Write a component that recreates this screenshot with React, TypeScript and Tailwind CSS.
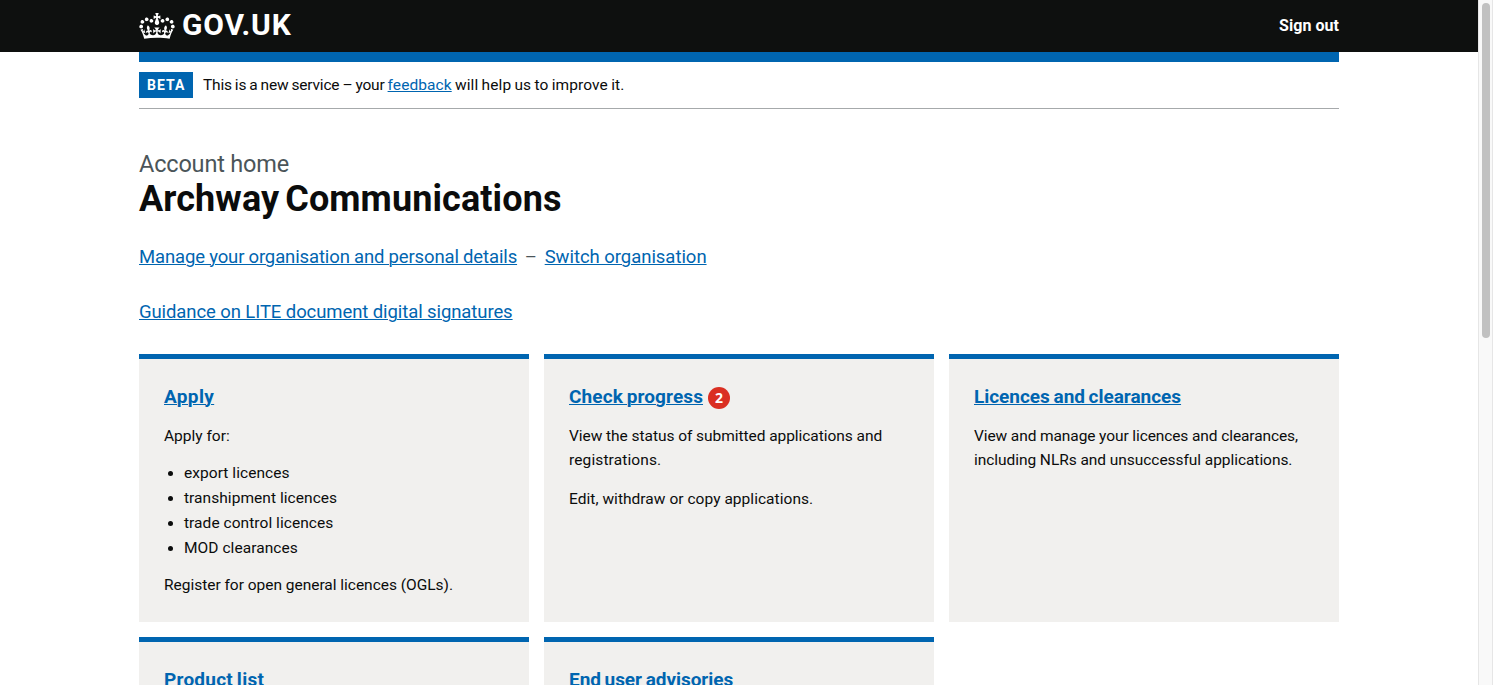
import type { ReactNode } from "react";

const linkClass = "text-[#0065b0] underline decoration-1 underline-offset-[1px]";

function Crown() {
  return (
    <svg viewBox="0 0 132 97" className="mt-px h-[26px] w-9 shrink-0" fill="currentColor" aria-hidden="true">
      <path
        fillRule="evenodd"
        d="M25 30.2c3.5 1.5 7.7-.2 9.1-3.7 1.5-3.6-.2-7.8-3.9-9.2-3.6-1.4-7.6.3-9.1 3.9-1.4 3.5.3 7.5 3.9 9zM9 39.5c3.6 1.5 7.8-.2 9.2-3.7 1.5-3.6-.2-7.8-3.9-9.1-3.6-1.5-7.6.2-9.1 3.8-1.4 3.5.3 7.5 3.8 9zM4.4 57.2c3.5 1.5 7.7-.2 9.1-3.8 1.5-3.6-.2-7.7-3.9-9.1-3.5-1.5-7.6.3-9.1 3.8-1.4 3.5.3 7.6 3.9 9.1zm38.3-21.4c3.5 1.5 7.7-.2 9.1-3.8 1.5-3.6-.2-7.7-3.9-9.1-3.6-1.5-7.6.3-9.1 3.8-1.3 3.6.4 7.7 3.9 9.1zm64.4-5.6c-3.6 1.5-7.8-.2-9.1-3.7-1.5-3.6.2-7.8 3.8-9.2 3.6-1.4 7.7.3 9.2 3.9 1.3 3.5-.4 7.5-3.9 9zm15.9 9.3c-3.6 1.5-7.7-.2-9.1-3.7-1.5-3.6.2-7.8 3.7-9.1 3.6-1.5 7.7.2 9.2 3.8 1.5 3.5-.3 7.5-3.8 9zm4.7 17.7c-3.6 1.5-7.8-.2-9.2-3.8-1.5-3.6.2-7.7 3.9-9.1 3.6-1.5 7.7.3 9.2 3.8 1.3 3.5-.4 7.6-3.9 9.1zM89.3 35.8c-3.6 1.5-7.8-.2-9.2-3.8-1.4-3.6.2-7.7 3.9-9.1 3.6-1.5 7.7.3 9.2 3.8 1.4 3.6-.3 7.7-3.9 9.1zM69.7 17.7l8.9 4.7V9.3l-8.9 2.8c-.2-.3-.5-.6-.9-.9L72.4 0H59.6l3.5 11.2c-.3.3-.6.5-.9.9l-8.8-2.8v13.1l8.8-4.7c.3.3.6.7.9.9l-5 15.4v.1c-.2.8-.4 1.6-.4 2.4 0 4.1 3.1 7.5 7 8.1h.2c.3 0 .7.1 1 .1.4 0 .7 0 1-.1h.2c4-.6 7.1-4.1 7.1-8.1 0-.8-.1-1.7-.4-2.4V34l-5.1-15.4c.4-.2.7-.6 1-.9zM66 92.8c16.9 0 32.8 1.1 47.1 3.2 4-16.9 8.9-26.7 14-33.5l-9.6-3.4c1 4.9 1.1 7.2 0 10.2-1.5-1.4-3-4.3-4.2-8.7L108.6 76c2.8-2 5-3.2 7.5-3.3-4.4 9.4-10 11.9-13.6 11.2-4.3-.8-6.3-4.6-5.6-7.9 1-4.7 5.7-5.9 8-.5 4.3-8.7-3-11.4-7.6-8.8 7.1-7.2 7.9-13.5 2.1-21.1-8 6.1-8.1 12.3-4.5 20.8-4.7-5.4-12.1-2.5-9.5 6.2 3.4-5.2 7.9-2 7.2 3.1-.6 4.3-6.4 7.8-13.5 7.2-10.3-.9-10.9-8-11.2-13.8 2.5-.5 7.1 1.8 11 7.3L80.2 60c-4.1 4.4-8 5.3-12.3 5.4 1.4-4.4 8-11.6 8-11.6H55.5s6.4 7.2 7.9 11.6c-4.2-.1-8-1-12.3-5.4l1.4 16.4c3.9-5.5 8.5-7.7 10.9-7.3-.3 5.8-.9 12.8-11.1 13.8-7.2.6-12.9-2.9-13.5-7.2-.7-5 3.8-8.3 7.1-3.1 2.7-8.7-4.6-11.6-9.4-6.2 3.7-8.5 3.6-14.7-4.6-20.8-5.8 7.6-5 13.9 2.2 21.1-4.7-2.6-11.9.1-7.7 8.8 2.3-5.5 7.1-4.2 8.1.5.7 3.3-1.3 7.1-5.7 7.9-3.5.7-9-1.8-13.5-11.2 2.5.1 4.7 1.3 7.5 3.3l-4.7-15.4c-1.2 4.4-2.7 7.2-4.3 8.7-1.1-3-.9-5.3 0-10.2l-9.5 3.4c5 6.9 9.9 16.7 14 33.5 14.8-2.1 30.8-3.2 47.7-3.2z"
      />
    </svg>
  );
}

function Tile({ title, tracking, count, children }: { title: string; tracking: string; count?: number; children?: ReactNode }) {
  return (
    <section className="min-h-[268px] border-t-[5px] border-[#0065b0] bg-[#f1f0ee] p-[25px]">
      <h2 className="mb-[15px] flex h-[25px] items-center text-[19px] leading-[25px] font-bold [word-spacing:-1px]">
        <a href="#" className={`${linkClass} ${tracking}`}>{title}</a>
        {count !== undefined && (
          <span className="mt-[3px] ml-[5px] flex size-[22px] items-center justify-center rounded-full bg-[#da2f22] font-['Open_Sans'] text-[14px] leading-none text-white">
            {count}
          </span>
        )}
      </h2>
      <div className="text-[15.5px] leading-6">{children}</div>
    </section>
  );
}

const licenceTypes = ["export licences", "transhipment licences", "trade control licences", "MOD clearances"];

export default function App() {
  return (
    <div className="flex h-[685px] w-full overflow-hidden bg-white font-['Roboto',sans-serif] text-[#0b0c0c]">
      <div className="min-w-0 flex-1">
        <header className="h-[52px] bg-[#0e100f] text-white">
          <div className="mx-auto flex h-full w-[1200px] items-center justify-between">
            <a href="#" className="flex items-center gap-[7px] pb-[2px]">
              <Crown />
              <span className="pb-px text-[30px] leading-[30px] font-bold tracking-[0.8px]">GOV.UK</span>
            </a>
            <a href="#" className="text-[16px] leading-5 font-bold tracking-[0.04px]">Sign out</a>
          </div>
        </header>

        <div className="mx-auto w-[1200px]">
          <div className="h-[10px] bg-[#0065b0]" />
          <div className="flex items-center gap-[10px] border-b border-[#a6a9ab] py-[10px]">
            <strong className="flex h-[26px] w-[54px] items-center bg-[#0065b0] pl-2 text-[14px] tracking-[1px] text-white">BETA</strong>
            <span className="text-[15.5px] leading-[26px] tracking-[0.09px] [word-spacing:-0.65px]">
              <span className="tracking-[-0.18px]">This is a new service – your </span>
              <a href="#" className={`${linkClass} tracking-[0.08px]`}>feedback</a> will help us to improve it.
            </span>
          </div>

          <main className="pt-10">
            <div className="text-[23.5px] leading-[30px] tracking-[-0.18px] text-[#4b5559]">Account home</div>
            <h1 className="text-[36px] leading-[41px] font-bold tracking-[0.1px] [word-spacing:-3px]">Archway Communications</h1>
            <div className="mt-[25px] flex text-[18.5px] leading-[25px]">
              <a href="#" className={`${linkClass} tracking-[-0.12px] [word-spacing:-0.3px]`}>Manage your organisation and personal details</a>
              <span className="w-[27.6px] text-center text-[#4b5559]">–</span>
              <a href="#" className={`${linkClass} tracking-[-0.04px]`}>Switch organisation</a>
            </div>
            <div className="mt-[30px] text-[18.5px] leading-[25px]">
              <a href="#" className={`${linkClass} tracking-[-0.09px]`}>Guidance on LITE document digital signatures</a>
            </div>

            <div className="mt-[29px] grid grid-cols-3 gap-[15px]">
              <Tile title="Apply" tracking="tracking-[0.35px]">
                <p>Apply for:</p>
                <ul className="mt-[15px] list-disc pl-5 leading-5">
                  {licenceTypes.map((type) => (
                    <li key={type} className="mb-[5px] tracking-[0.05px]">{type}</li>
                  ))}
                </ul>
                <p className="mt-[15px] tracking-[-0.02px]">Register for open general licences (OGLs).</p>
              </Tile>
              <Tile title="Check progress" tracking="tracking-[0.1px]" count={2}>
                <p className="tracking-[-0.05px]">
                  View the status of submitted applications and <span className="tracking-[0.12px]">registrations.</span>
                </p>
                <p className="mt-[15px] tracking-[0.04px]">Edit, withdraw or copy applications.</p>
              </Tile>
              <Tile title="Licences and clearances" tracking="tracking-[-0.03px]">
                <p className="tracking-[-0.1px]">
                  View and manage your licences and clearances,{" "}
                  <span className="tracking-[-0.05px]">including NLRs and unsuccessful applications.</span>
                </p>
              </Tile>
              <Tile title="Product list" tracking="tracking-[0.23px]" />
              <Tile title="End user advisories" tracking="tracking-[-0.05px]" />
            </div>
          </main>
        </div>
      </div>

      <div className="w-[15px] shrink-0 border-x border-[#e6e6e6] bg-[#f9f9f9] pt-[3px] pl-[3px]">
        <div className="h-[335px] w-2 rounded-full bg-[#c1c1c1]" />
      </div>
    </div>
  );
}
